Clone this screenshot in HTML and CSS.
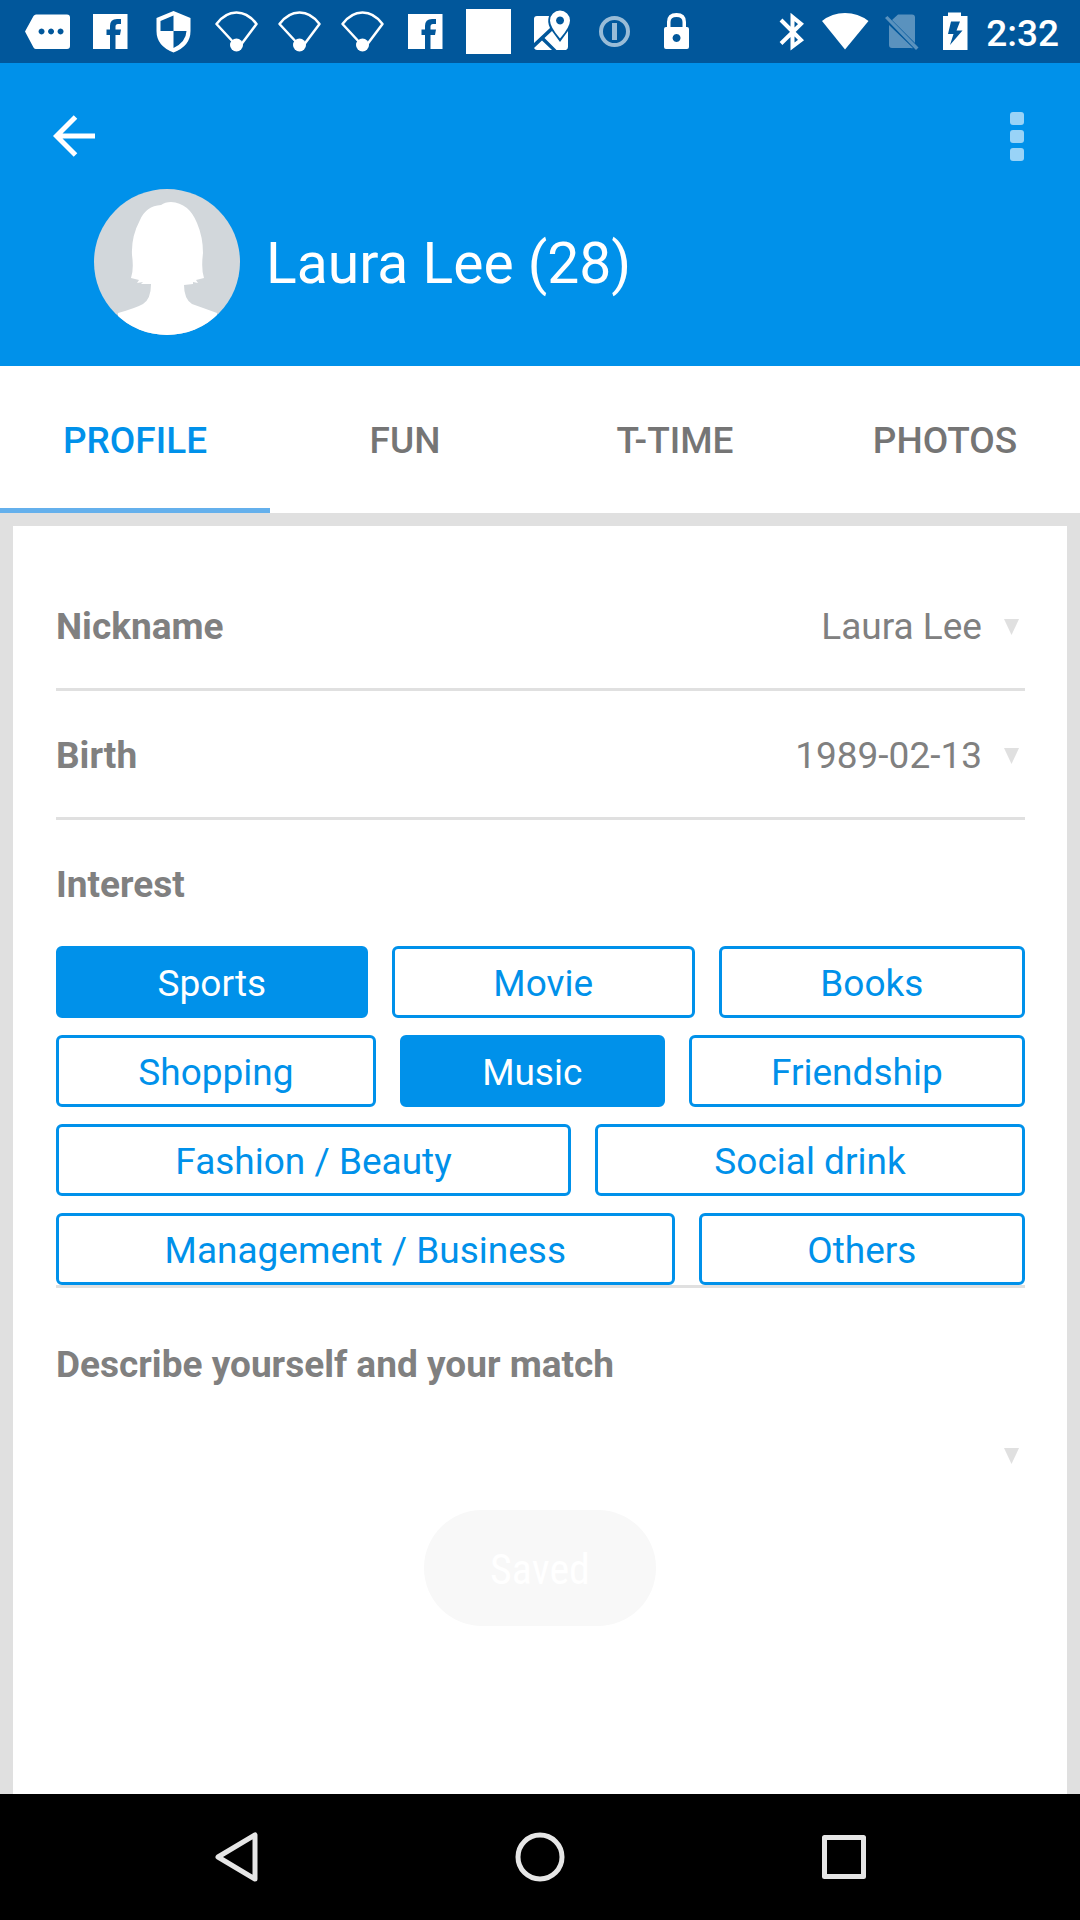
FILE: index.html
```html
<!DOCTYPE html>
<html lang="en">
<head>
<meta charset="utf-8">
<meta name="viewport" content="width=device-width, initial-scale=1">
<title>Laura Lee – Profile</title>
<link rel="stylesheet" href="styles.css">
</head>
<body>
<div class="screen">
  <svg class="symbols" aria-hidden="true">
    <symbol id="i-facebook" viewBox="0 0 63 63">
      <path d="M14 14H48.500V49H36.500V35H41L42 29.500H36.500V26.500Q36.500 24 39 24H42V19H38Q31 19 31 26V29.500H27.500V35H31V49H14Z"/>
    </symbol>
    <symbol id="i-signal" viewBox="0 0 63 63">
      <path fill="none" stroke="#fff" stroke-width="2.500" stroke-linejoin="round" d="M30 44 11.500 24Q20 12.500 31.500 12.500T51.500 24L35 46"/>
      <circle cx="31.500" cy="45" r="6.500"/>
    </symbol>
  </svg>

  <div class="status">
    <div class="status-group">
      <svg class="note" viewBox="0 0 63 63"><path fill-rule="evenodd" d="M20 14.500H51Q54 14.500 54 17.500V46Q54 49 51 49H20Q18.500 49 17.500 47.500L9 31.500 17.500 16Q18.500 14.500 20 14.500ZM25.500 28.500a3 3 0 1 0 .1 0ZM35 28.500a3 3 0 1 0 .1 0ZM44.500 28.500a3 3 0 1 0 .1 0Z"/></svg>
      <svg class="note" viewBox="0 0 63 63"><use href="#i-facebook"/></svg>
      <svg class="note" viewBox="0 0 63 63"><path fill-rule="evenodd" d="M31.500 11 48.500 18V31Q48.500 46 31.500 52.500 14.500 46 14.500 31V18ZM31.500 15.500V31H18.500V21ZM31.500 31H44.500Q44 42 31.500 48Z"/></svg>
      <svg class="note" viewBox="0 0 63 63"><use href="#i-signal"/></svg>
      <svg class="note" viewBox="0 0 63 63"><use href="#i-signal"/></svg>
      <svg class="note" viewBox="0 0 63 63"><use href="#i-signal"/></svg>
      <svg class="note" viewBox="0 0 63 63"><use href="#i-facebook"/></svg>
      <svg class="note" viewBox="0 0 63 63"><path d="M9 9H54V54H9Z"/></svg>
      <svg class="note" viewBox="0 0 63 63">
        <path d="M17 16H29Q27 22 30 28L14 43V19Q14 16 17 16ZM14 48 22 40.500 32 50H17Q15 50 14 48ZM24.500 38 32 31 40 42 48 31V47Q48 49 46 50H36.500Z"/>
        <path fill-rule="evenodd" d="M40 10.500A10 10 0 0 1 50 20.500Q50 27 40 38.500 30 27 30 20.500A10 10 0 0 1 40 10.500ZM40 16.500a4 4 0 1 0 .1 0Z"/>
      </svg>
      <svg class="note note-dim" viewBox="0 0 63 63"><circle cx="31.500" cy="31.500" r="13.500" fill="none" stroke="#fff" stroke-width="4"/><path d="M29 23H34V40H29Z"/></svg>
      <svg class="note" viewBox="0 0 63 63"><path fill-rule="evenodd" d="M21 27V22Q21 13 30.500 13T40 22V27H41Q43 27 43 29V47Q43 49 41 49H20Q18 49 18 47V29Q18 27 20 27ZM24.500 27H36.500V22Q36.500 17 30.500 17T24.500 22ZM30.500 34a4 4 0 1 0 .1 0Z"/></svg>
    </div>
    <div class="status-group">
      <svg class="sys" viewBox="0 0 54 63"><path fill="none" stroke="#fff" stroke-width="4" d="M17 20 37 40 28.500 46.500V17L37 24 17 43.500"/></svg>
      <svg class="sys" viewBox="0 0 54 63"><path d="M4 21Q14 13 27 13T50.500 21L27 49.500Z"/></svg>
      <svg class="sys sys-dim" viewBox="0 0 54 63"><path d="M17 25 41 48Q40 48.500 39 48H20Q17 48 17 45ZM20 20 26 14.500H40Q43 14.500 43 17.500V43ZM13 18 15.500 16 46.500 47.500 44 50Z"/></svg>
      <svg class="sys" viewBox="0 0 54 63"><path fill-rule="evenodd" d="M17 16H22V12.500H35V16H41.500V50H17ZM25 21.500 22 34H27.500L24 45 36.500 30.500H30.500L34 21.500Z"/></svg>
      <time class="clock">2:32</time>
    </div>
  </div>

  <header class="header">
    <div class="toolbar">
      <button class="icon-button" type="button" aria-label="Back">
        <svg class="back-icon" viewBox="0 0 42 42"><path fill="none" stroke="#fff" stroke-width="5" d="M42 21H4M22.500 2 3.500 21 22.500 40"/></svg>
      </button>
      <button class="icon-button more" type="button" aria-label="More options">
        <span class="dot"></span><span class="dot"></span><span class="dot"></span>
      </button>
    </div>
    <div class="person">
      <svg class="avatar" viewBox="0 0 146 146" role="img" aria-label="Profile picture">
        <clipPath id="round"><circle cx="73" cy="73" r="73"/></clipPath>
        <g clip-path="url(#round)">
          <path fill="#d2d7db" d="M0 0H146V146H0Z"/>
          <path fill="#fff" d="M67 16Q71 13 77 13 95 14 103 34 109 48 109 64 107 80 110 89L102 91 104 94 99 93V95L90 96Q90 110 98 115 112 120 123 124V146H24V124Q42 119 49 115 57 110 57 95L47 95 49 93 43 94 45 91 37 89Q40 80 38 66 37 48 46 31 52 17 67 16Z"/>
        </g>
      </svg>
      <h1 class="name">Laura Lee (28)</h1>
    </div>
  </header>

  <div class="tabs" role="tablist">
    <button class="tab tab-active" type="button" role="tab" aria-selected="true">PROFILE</button>
    <button class="tab" type="button" role="tab" aria-selected="false">FUN</button>
    <button class="tab" type="button" role="tab" aria-selected="false">T-TIME</button>
    <button class="tab" type="button" role="tab" aria-selected="false">PHOTOS</button>
  </div>

  <main class="content">
    <section class="card">
      <div class="row">
        <h2 class="label" id="nickname">Nickname</h2>
        <button class="value" type="button" aria-describedby="nickname">Laura Lee<span class="caret"></span></button>
      </div>
      <div class="row">
        <h2 class="label" id="birth">Birth</h2>
        <button class="value" type="button" aria-describedby="birth">1989-02-13<span class="caret"></span></button>
      </div>
      <div class="interest">
        <h2 class="label label-block">Interest</h2>
        <div class="chips">
          <div class="chip-row">
            <button class="chip chip-on" type="button" aria-pressed="true">Sports</button>
            <button class="chip" type="button" aria-pressed="false">Movie</button>
            <button class="chip" type="button" aria-pressed="false">Books</button>
          </div>
          <div class="chip-row">
            <button class="chip" type="button" aria-pressed="false">Shopping</button>
            <button class="chip chip-on" type="button" aria-pressed="true">Music</button>
            <button class="chip" type="button" aria-pressed="false">Friendship</button>
          </div>
          <div class="chip-row">
            <button class="chip" type="button" aria-pressed="false">Fashion / Beauty</button>
            <button class="chip" type="button" aria-pressed="false">Social drink</button>
          </div>
          <div class="chip-row">
            <button class="chip" type="button" aria-pressed="false">Management / Business</button>
            <button class="chip" type="button" aria-pressed="false">Others</button>
          </div>
        </div>
      </div>
      <div class="describe">
        <h2 class="label label-block" id="describe">Describe yourself and your match</h2>
        <button class="value value-wide" type="button" aria-labelledby="describe"><span class="caret"></span></button>
      </div>
    </section>
  </main>

  <div class="toast" role="status">Saved</div>

  <nav class="navbar">
    <button class="nav-button" type="button" aria-label="Back"><svg class="nav-icon" viewBox="0 0 50 50"><path d="M7 25 44 3V47Z"/></svg></button>
    <button class="nav-button" type="button" aria-label="Home"><svg class="nav-icon" viewBox="0 0 50 50"><circle cx="25" cy="25" r="22"/></svg></button>
    <button class="nav-button" type="button" aria-label="Recent apps"><svg class="nav-icon" viewBox="0 0 50 50"><path d="M5.500 5.500H44.500V44.500H5.500Z"/></svg></button>
  </nav>
</div>
</body>
</html>
```

FILE: styles.css
```css
* {
  box-sizing: border-box;
}

body {
  margin: 0;
  font-family: Roboto, "Liberation Sans", sans-serif;
  font-size: 37px;
  line-height: 42px;
  color: #808080;
}

button {
  padding: 0;
  border: 0;
  background: none;
  font: inherit;
  color: inherit;
}

h1,
h2 {
  margin: 0;
}

svg {
  display: block;
}

.symbols {
  display: none;
}

.screen {
  position: relative;
  display: flex;
  flex-direction: column;
  min-height: 100vh;
  background: #e0e0e0;
}

/* Status bar */
.status {
  display: flex;
  justify-content: space-between;
  padding: 0 21px 0 16px;
  background: #01579b;
  color: #fff;
}

.status-group {
  display: flex;
  align-items: center;
}

.note,
.sys {
  height: 63px;
  fill: #fff;
}

.note {
  width: 63px;
}

.sys {
  width: 54px;
}

.note-dim {
  opacity: 0.6;
}

.sys-dim {
  opacity: 0.35;
}

.clock {
  margin-left: 6px;
  padding-top: 4px;
  font-size: 37px;
  font-weight: 500;
}

/* Header */
.header {
  padding-bottom: 31px;
  background: #0091ea;
  color: #fff;
}

.toolbar {
  display: flex;
  justify-content: space-between;
  padding: 10px 0 0;
}

.icon-button {
  display: flex;
  align-items: center;
  justify-content: center;
  width: 148px;
  height: 126px;
}

.back-icon {
  width: 42px;
  height: 42px;
}

.more {
  flex-direction: column;
  gap: 5px;
  width: 126px;
}

.dot {
  width: 14px;
  height: 13px;
  border-radius: 3px;
  background: #99d3f7;
}

.person {
  display: flex;
  align-items: center;
  gap: 26px;
  margin-top: -10px;
  padding-left: 94px;
}

.avatar {
  width: 146px;
  height: 146px;
}

.name {
  padding-top: 4px;
  font-size: 57px;
  line-height: 68px;
  font-weight: 400;
}

/* Tabs */
.tabs {
  display: flex;
  background: #fff;
}

.tab {
  flex: 1;
  height: 147px;
  padding-top: 8px;
  border-bottom: 5px solid transparent;
  font-weight: 500;
  color: #757575;
}

.tab-active {
  border-bottom-color: #64b0ec;
  color: #0091ea;
}

/* Profile card */
.content {
  display: flex;
  flex: 1;
  padding: 13px 13px 0;
}

.card {
  flex: 1;
  padding: 36px 42px 0 43px;
  background: #fff;
}

.row {
  display: flex;
  align-items: center;
  justify-content: space-between;
  height: 129px;
  padding-top: 4px;
  border-bottom: 3px solid #e0e0e0;
}

.label {
  font-size: 37px;
  font-weight: 700;
}

.label-block {
  padding-top: 4px;
  line-height: 122px;
}

.value {
  display: flex;
  align-items: center;
  gap: 22px;
  padding-right: 6px;
}

.value-wide {
  justify-content: flex-end;
  width: 100%;
  height: 60px;
}

.caret {
  width: 15px;
  height: 16px;
  background: #e0e0e0;
  clip-path: polygon(0 0, 100% 0, 50% 100%);
}

.interest {
  border-bottom: 3px solid #e0e0e0;
}

.chips {
  display: flex;
  flex-direction: column;
  gap: 17px;
}

.chip-row {
  display: flex;
  gap: 24px;
}

.chip {
  flex: 1 1 auto;
  height: 72px;
  padding-top: 4px;
  border: 3px solid #0091ea;
  border-radius: 6px;
  color: #0091ea;
}

.chip-on {
  background: #0091ea;
  color: #fff;
}

.describe {
  padding-top: 12px;
}

/* Toast over the page */
.toast {
  position: absolute;
  bottom: 294px;
  left: 50%;
  min-width: 232px;
  padding: 39px 58px 35px;
  border-radius: 58px;
  background: #f8f8f8;
  font-family: "Roboto Condensed", Roboto, sans-serif;
  font-size: 42px;
  text-align: center;
  color: #fff;
  transform: translateX(-50%);
}

/* System navigation */
.navbar {
  display: flex;
  padding: 0 84px;
  background: #000;
}

.nav-button {
  display: flex;
  flex: 1;
  align-items: center;
  justify-content: center;
  height: 126px;
}

.nav-icon {
  width: 50px;
  height: 50px;
  fill: none;
  stroke: #e6e6e6;
  stroke-width: 5;
  stroke-linejoin: round;
}
```
